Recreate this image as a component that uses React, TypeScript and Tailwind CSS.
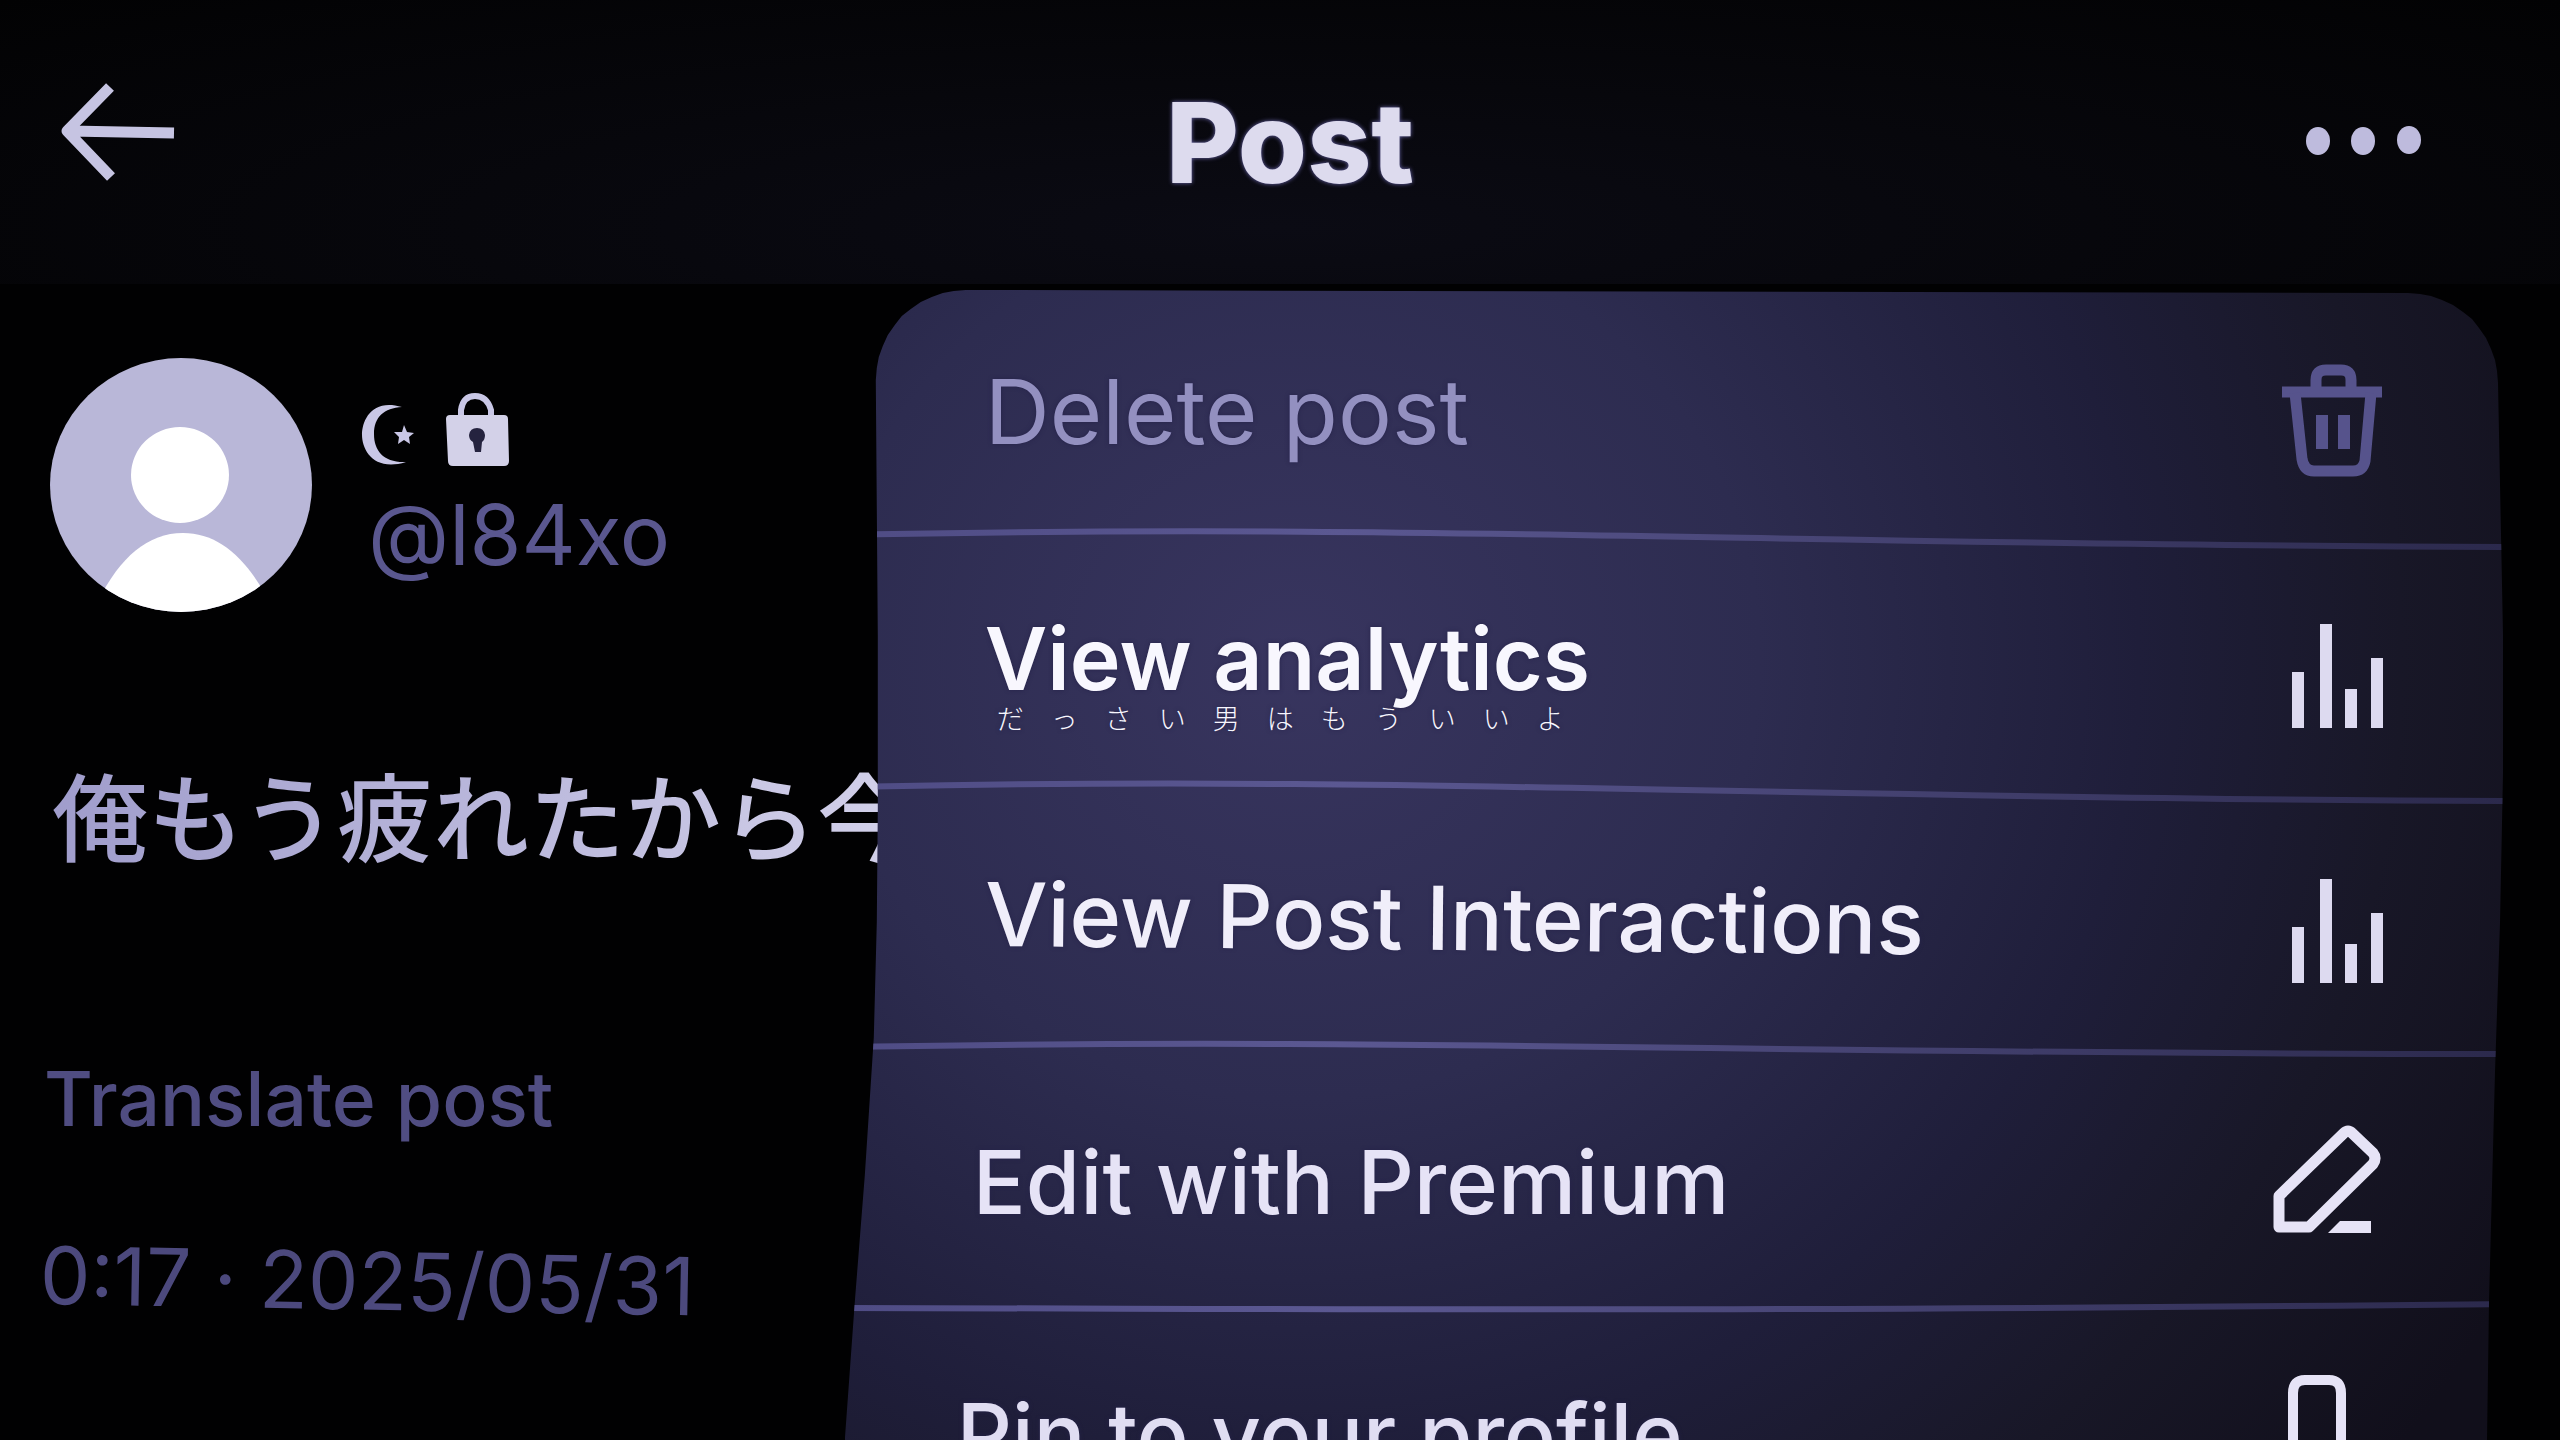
import type { ReactNode } from "react";

type MenuItem = {
  label: string;
  caption?: string;
  icon: ReactNode;
  rowClass: string;
  textClass: string;
  divider: string;
};

function TrashIcon() {
  return (
    <svg viewBox="0 0 120 120" className="size-[120px] overflow-visible" fill="none" stroke="#56538c" strokeWidth="11" aria-hidden="true">
      <path d="M11 44H111" />
      <path d="M45 41V32Q45 22 55 22H70Q80 22 80 32V41" />
      <path d="M24 45L31 111Q33 123 43 123H82Q92 123 94 113L100 45" />
      <path d="M51 67V101M73 67V101" strokeWidth="12" />
    </svg>
  );
}

function BarsIcon() {
  return (
    <svg viewBox="0 0 120 120" className="size-[120px] overflow-visible" fill="none" stroke="#dddaf0" strokeWidth="12" aria-hidden="true">
      <path d="M27 67V123M55 19V123M80 84V123M106 53V123" />
    </svg>
  );
}

function PencilIcon() {
  return (
    <svg viewBox="0 0 120 120" className="size-[120px]" fill="none" stroke="#e6e3f6" strokeWidth="11" strokeLinejoin="round" aria-hidden="true">
      <path d="M8 109V78L73 15Q77 11 81 15L102 35Q106 40 102 46L38 109Z" />
      <path d="M57 115L69 103H100V115Z" fill="#e6e3f6" stroke="none" />
    </svg>
  );
}

function PinIcon() {
  return (
    <svg viewBox="0 0 120 120" className="size-[120px]" fill="none" stroke="#e6e3f6" strokeWidth="10" aria-hidden="true">
      <path d="M22 120V18Q22 5 34 5H58Q70 5 70 18V120" />
    </svg>
  );
}

const menuItems: MenuItem[] = [
  {
    label: "Delete post",
    icon: <TrashIcon />,
    rowClass: "h-[236px] pl-35",
    textClass: "pt-2 text-[90px] text-[#9390c0]",
    divider: "M0 9C560 -3 900 18 1658 21",
  },
  {
    label: "View analytics",
    caption: "だ　っ　さ　い　男　は　も　う　い　い　よ",
    icon: <BarsIcon />,
    rowClass: "h-[230px] pl-35",
    textClass: "pb-3 text-[86px] font-semibold text-[#f8f7fe]",
    divider: "M0 7C560 -5 900 18 1658 21",
  },
  {
    label: "View Post Interactions",
    icon: <BarsIcon />,
    rowClass: "h-[232px] pl-35",
    textClass: "origin-left rotate-[0.5deg] pb-3 text-[88px] font-medium text-[#f0eefa]",
    divider: "M0 11C560 1 900 18 1658 18",
  },
  {
    label: "Edit with Premium",
    icon: <PencilIcon />,
    rowClass: "h-[236px] pl-32",
    textClass: "pt-2 text-[88px] font-medium text-[#e6e3f6]",
    divider: "M0 12C560 13 900 16 1658 8",
  },
  {
    label: "Pin to your profile",
    icon: <PinIcon />,
    rowClass: "h-[230px] pl-28",
    textClass: "text-[86px] font-medium text-[#e0ddf2]",
    divider: "",
  },
];

function Divider({ d }: { d: string }) {
  return (
    <svg viewBox="0 0 1658 24" preserveAspectRatio="none" className="block h-6 w-full overflow-visible" fill="none" aria-hidden="true">
      <defs>
        <linearGradient id="rule" gradientUnits="userSpaceOnUse" x1="0" y1="0" x2="1658" y2="0">
          <stop offset="0" stopColor="#4f4c85" />
          <stop offset="0.3" stopColor="#5b5892" />
          <stop offset="1" stopColor="#2b294c" />
        </linearGradient>
      </defs>
      <path d={d} stroke="url(#rule)" strokeWidth="6" />
    </svg>
  );
}

function Header() {
  return (
    <header className="flex h-[284px] shrink-0 items-center justify-between bg-radial-[at_50%_80%] from-[#0b0b14] via-[#07070c] via-45% to-[#020203] pr-[132px] pl-[56px]">
      <button type="button" aria-label="Back">
        <svg viewBox="0 0 128 120" className="h-[120px] w-32" fill="none" stroke="#c6c4e2" strokeWidth="11" aria-hidden="true">
          <path d="M54 5L11 49L55 95M14 49L118 51" strokeLinejoin="round" />
        </svg>
      </button>
      <h1 className="pl-24 text-[112px] leading-[120px] font-extrabold text-[#dddbee] [text-shadow:0_0_4px_#6d69b0]">Post</h1>
      <button type="button" aria-label="More">
        <svg viewBox="0 0 128 40" className="h-10 w-32" fill="#bebbdd" aria-hidden="true">
          <ellipse cx="18" cy="19" rx="12" ry="14" />
          <ellipse cx="63" cy="19" rx="12" ry="14" />
          <ellipse cx="109" cy="18" rx="12" ry="14" />
        </svg>
      </button>
    </header>
  );
}

function Avatar() {
  return (
    <svg viewBox="0 0 264 256" className="h-64 w-[264px] shrink-0" role="img" aria-label="Avatar">
      <defs>
        <clipPath id="disc">
          <ellipse cx="133" cy="128" rx="131" ry="127" />
        </clipPath>
      </defs>
      <g clipPath="url(#disc)">
        <rect width="264" height="256" fill="#b9b7d8" />
        <ellipse cx="132" cy="118" rx="49" ry="48" fill="#fff" />
        <path d="M50 244C72 200 100 176 135 176S198 200 222 246V256H50Z" fill="#fff" />
      </g>
    </svg>
  );
}

function Post() {
  return (
    <article className="flex flex-col items-start pt-[73px] pl-10 whitespace-nowrap">
      <div className="flex gap-12 pl-2">
        <Avatar />
        <div className="flex flex-col pt-8">
          <svg viewBox="0 0 160 84" className="h-21 w-40" aria-label="Private account" role="img">
            <path d="M42 18C12 9 2 31 2 46S14 83 46 73C24 74 14 62 14 45S24 19 42 18Z" fill="#c9c7e6" />
            <path d="M44 36L47 43L54 44L49 48L50 55L44 51L38 55L39 48L34 43L42 43Z" fill="#c9c7e6" />
            <path d="M101 27V21Q103 7 115 7T131 21V27" fill="none" stroke="#c9c7e6" strokeWidth="6" />
            <path d="M90 26H144Q148 26 148 30L149 72Q149 77 144 77H93Q88 77 88 72L86 30Q86 26 90 26Z" fill="#d3d1e8" />
            <path d="M109 46Q110 39 117 39T125 46Q125 51 122 53L121 63H115L113 53Q109 51 109 46Z" fill="#25233f" />
          </svg>
          <a href="#profile" className="pl-2 text-[84px] leading-[124px] text-[#5a578f]">
            @l84xo
          </a>
        </div>
      </div>
      <p className="mt-[138px] bg-linear-to-r from-[#9f9ccb] to-[#d3d1ea] bg-clip-text pl-3 text-[96px] leading-[136px] font-medium text-transparent">
        俺もう疲れたから今
      </p>
      <button type="button" className="mt-[152px] pl-1 text-[75px] leading-[120px] font-medium text-[#504d82]">
        Translate post
      </button>
      <time className="mt-14 origin-left rotate-1 text-[80px] leading-[120px] text-[#4c497d]">0:17 · 2025/05/31</time>
    </article>
  );
}

function Menu() {
  return (
    <ul className="absolute top-[6px] right-[57px] bottom-0 left-[33%] overflow-hidden bg-[radial-gradient(88%_120%_at_27%_32%,#38355f,#2d2c50_32%,#1f1e3a_58%,#181727_76%,#110f1b_95%)] whitespace-nowrap [clip-path:polygon(31px_90px,32px_78px,34px_67px,38px_56px,43px_45px,50px_35px,57px_26px,66px_19px,76px_12px,87px_7px,98px_3px,109px_1px,121px_0,calc(100%-95px)_3px,calc(100%-83px)_4px,calc(100%-72px)_6px,calc(100%-61px)_10px,calc(100%-50px)_15px,calc(100%-40px)_22px,calc(100%-31px)_29px,calc(100%-24px)_38px,calc(100%-17px)_48px,calc(100%-12px)_59px,calc(100%-8px)_70px,calc(100%-6px)_81px,calc(100%-5px)_93px,100%_30%,100%_42%,calc(100%-3px)_55%,calc(100%-8px)_68%,calc(100%-14px)_88%,calc(100%-16px)_100%,0_100%,10px_88%,20px_77%,29px_65%,32px_55%,33px_45%,33px_30%)]">
      {menuItems.map((item) => (
        <li key={item.label}>
          <button type="button" className={`flex w-full items-center justify-between pr-28 text-left ${item.rowClass}`}>
            <span className={`relative leading-[112px] [text-shadow:0_0_4px_#26234a] ${item.textClass}`}>
              {item.label}
              {item.caption && (
                <span className="absolute top-[101px] left-3 text-[27px] leading-8 font-light">{item.caption}</span>
              )}
            </span>
            {item.icon}
          </button>
          {item.divider && <Divider d={item.divider} />}
        </li>
      ))}
    </ul>
  );
}

export default function App() {
  return (
    <div className="flex h-screen flex-col overflow-hidden bg-[#010102] font-['Inter','Noto_Sans_CJK_JP',sans-serif]">
      <Header />
      <main className="relative flex-1 overflow-hidden">
        <Post />
        <Menu />
      </main>
    </div>
  );
}
